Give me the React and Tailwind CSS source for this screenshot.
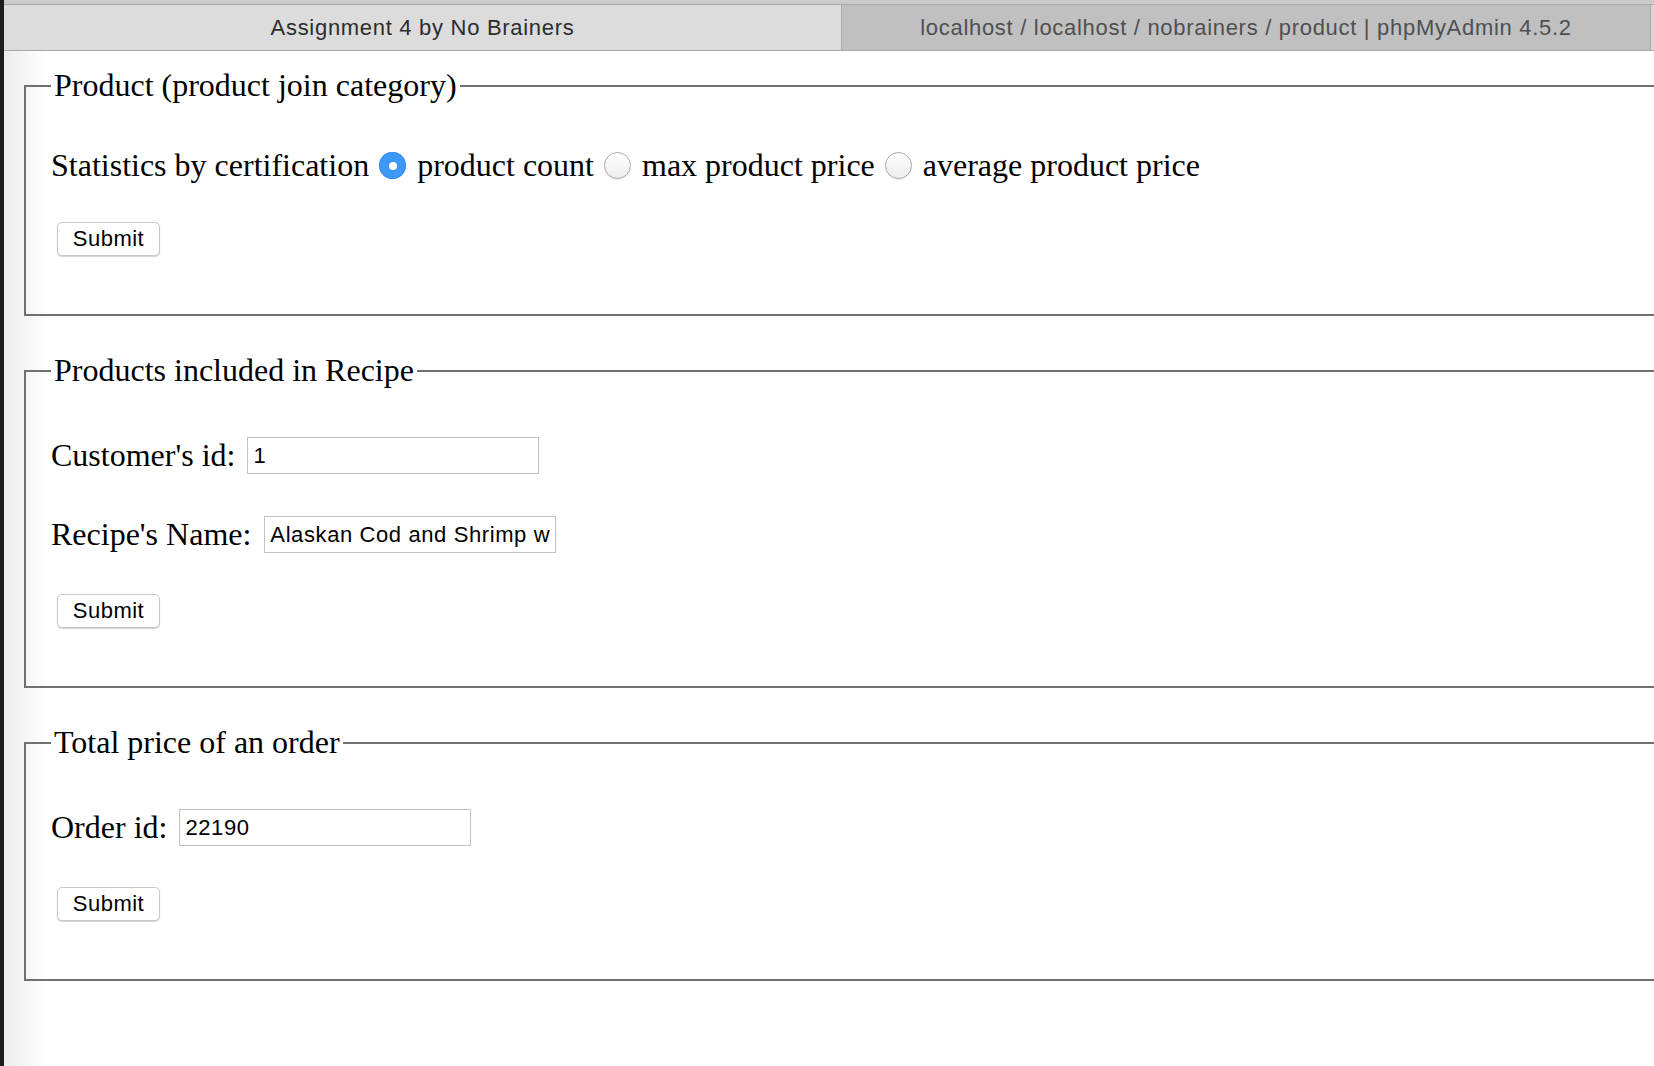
import React from "react";

const serif = "font-['Liberation_Serif','Times_New_Roman',serif] text-black";
const sans = "font-['Liberation_Sans',Arial,sans-serif]";

const Radio = ({ checked }) =>
  checked ? (
    <span className="w-[27px] h-[27px] shrink-0 rounded-full bg-[#3d98f8] shadow-[inset_0_0_0_1px_#3a8fe8] flex items-center justify-center">
      <span className="w-[8px] h-[8px] rounded-full bg-white" />
    </span>
  ) : (
    <span className="w-[27px] h-[27px] shrink-0 rounded-full border border-[#a8a8a8] bg-gradient-to-b from-white to-[#ededed] shadow-[0_1px_1px_rgba(0,0,0,0.1)]" />
  );

const SubmitButton = ({ className = "" }) => (
  <button
    type="button"
    className={`${sans} ${className} ml-[6px] w-[103px] h-[34px] rounded-[5px] border border-[#c8c8c8] bg-white shadow-[0_1px_1px_rgba(0,0,0,0.18)] text-[22px] tracking-[0.5px] text-black leading-none`}
  >
    Submit
  </button>
);

const TextBox = ({ value, className = "" }) => (
  <input
    type="text"
    defaultValue={value}
    className={`${sans} ${className} w-[292px] h-[37px] border border-[#c2c2c2] bg-white px-[5px] text-[22px] tracking-[0.6px] text-black outline-none`}
  />
);

const Box = ({ title, className = "", children }) => (
  <fieldset
    className={`${serif} ${className} ml-[20px] border-2 border-r-0 border-[#707070] pl-[25px] pt-[43px] pb-[58px] flex flex-col items-start`}
  >
    <legend className="px-[3px] text-[32px] leading-[37px]">{title}</legend>
    {children}
  </fieldset>
);

export default function App() {
  return (
    <div className="h-[1066px] w-full overflow-hidden flex bg-white">
      {/* window edge */}
      <div className="w-[4px] shrink-0 bg-[#1d1d1d]" />

      <div className="flex-1 flex flex-col min-w-0">
        {/* browser tabs */}
        <div className="h-[4px] bg-[#cacaca]" />
        <div className={`${sans} h-[47px] flex border-t border-b border-[#a8a8a8] bg-[#d6d6d6] text-[22px] tracking-[0.7px]`}>
          <div className="w-[837px] flex items-center justify-center bg-[#dddcdd] text-[#2c2c2c]">
            Assignment 4 by No Brainers
          </div>
          <div className="w-[810px] flex items-center justify-center border-l border-r border-[#a9a9a9] bg-[#c1c0c1] text-[#4f4f4f]">
            localhost / localhost / nobrainers / product | phpMyAdmin 4.5.2
          </div>
        </div>

        {/* page */}
        <div className="flex-1 bg-[linear-gradient(to_right,#ececec,#ffffff_42px)]">
          <Box title="Product (product join category)" className="mt-[16px]">
            <div className="h-[37px] flex items-center text-[32px] leading-[37px]">
              <span>Statistics by certification</span>
              <span className="ml-[10px] mr-[11px] flex"><Radio checked /></span>
              <span>product count</span>
              <span className="ml-[10px] mr-[11px] flex"><Radio /></span>
              <span>max product price</span>
              <span className="ml-[10px] mr-[11px] flex"><Radio /></span>
              <span>average product price</span>
            </div>
            <SubmitButton className="mt-[38px]" />
          </Box>

          <Box title="Products included in Recipe" className="mt-[36px]">
            <div className="mt-[5px] h-[37px] flex items-center text-[32px] leading-[37px]">
              <span>Customer's id:</span>
              <TextBox value="1" className="ml-[12px]" />
            </div>
            <div className="mt-[42px] h-[37px] flex items-center text-[32px] leading-[37px]">
              <span>Recipe's Name:</span>
              <TextBox value="Alaskan Cod and Shrimp with Fresh Pesto" className="ml-[13px]" />
            </div>
            <SubmitButton className="mt-[41px]" />
          </Box>

          <Box title="Total price of an order" className="mt-[36px]">
            <div className="mt-[5px] h-[37px] flex items-center text-[32px] leading-[37px]">
              <span>Order id:</span>
              <TextBox value="22190" className="ml-[12px] w-[291px]" />
            </div>
            <SubmitButton className="mt-[41px]" />
          </Box>
        </div>
      </div>
    </div>
  );
}
